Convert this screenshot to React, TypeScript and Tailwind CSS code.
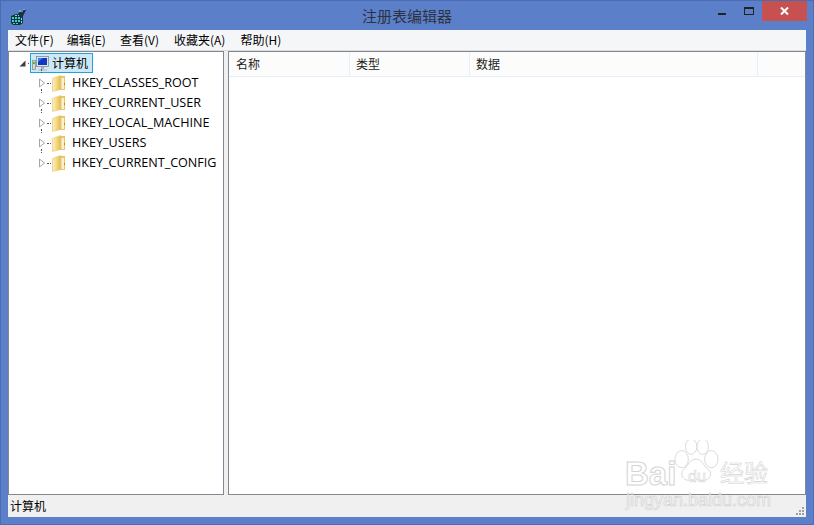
import type { ReactNode } from 'react';

const cjk = "font-['Noto_Sans_CJK_SC','Noto_Sans',sans-serif]";

const menus = [
  { label: '文件(F)', gap: 'mr-[13px]' },
  { label: '编辑(E)', gap: 'mr-[14px]' },
  { label: '查看(V)', gap: 'mr-[15px]' },
  { label: '收藏夹(A)', gap: 'mr-[15px]' },
  { label: '帮助(H)', gap: 'mr-0' },
];
const hives = ['HKEY_CLASSES_ROOT', 'HKEY_CURRENT_USER', 'HKEY_LOCAL_MACHINE', 'HKEY_USERS', 'HKEY_CURRENT_CONFIG'];
const columns = [
  { label: '名称', width: 'w-[121px] pl-[7px]' },
  { label: '类型', width: 'w-[120px] pl-[6px]' },
  { label: '数据', width: 'w-[288px] pl-[6px]' },
];

const RegeditIcon = () => (
  <svg width="17" height="17" viewBox="0 0 17 17">
    <path d="M1 8l5-2 6 1 1 3v5l-3 2H3l-2-2z" fill="#12343a" />
    <path d="M2 9h2v2H2zM5 9h2v2H5zM8 9h2v2H8zM2 12h2v2H2zM5 12h2v2H5zM8 12h2v2H8zM3 15h2v1H3zM6 15h2v1H6z" fill="#36d4cc" />
    <path d="M5 7h2v1H5zM8 7h2v1H8zM11 10h1v2h-1zM11 13h1v2h-1z" fill="#7fe6e0" />
    <path d="M8 6l2-4 2 3 2-4 2 1-2 4-2 4-2-1z" fill="#18303f" />
    <path d="M9 2h2v2H9zM13 1h2v1h-2z" fill="#6db8da" />
  </svg>
);

const ComputerIcon = () => (
  <svg width="17" height="17" viewBox="0 0 17 17">
    <rect x="0.5" y="5.5" width="3" height="9" fill="#d4d8d4" stroke="#8b958b" strokeWidth="0.8" />
    <rect x="1" y="7" width="2" height="2" fill="#52b84c" />
    <rect x="4.5" y="1.5" width="12" height="10" fill="#dfe4ea" stroke="#80899a" strokeWidth="0.8" />
    <rect x="6" y="3" width="9" height="7" fill="#1436c4" />
    <path d="M6 3h5l-5 4z" fill="#2f86e8" />
    <rect x="9" y="12" width="3" height="2" fill="#a7aeb8" />
    <rect x="6" y="14" width="9" height="2" fill="#c6ccd4" />
  </svg>
);

const FolderIcon = ({ id }: { id: string }) => (
  <svg width="14" height="17" viewBox="0 0 14 17">
    <defs>
      <linearGradient id={id} x1="0" y1="0" x2="1" y2="0">
        <stop offset="0" stopColor="#fbf1c4" />
        <stop offset="0.55" stopColor="#f3d77e" />
        <stop offset="1" stopColor="#e2bb55" />
      </linearGradient>
    </defs>
    <path d="M7 1h6v14H7z" fill="#eac766" />
    <path d="M9.5 3h2.5v11H9.5z" fill="#fbf3cf" />
    <path d="M12 8h1v2h-1z" fill="#b98a2c" />
    <path d="M.5 3.5l8-3v14l-8 2z" fill={`url(#${id})`} stroke="#e0c272" strokeWidth="0.6" />
  </svg>
);

const Panel = ({ className, children }: { className: string; children: ReactNode }) => (
  <div className={`border border-[#828790] bg-white ${className}`}>{children}</div>
);

const TreeRow = ({ label }: { label: string }) => (
  <div className="relative flex h-5 items-center">
    {/* tree connector, runs down between the rows */}
    <div className="absolute left-[32px] top-[-4px] h-1 w-px border-l border-dotted border-[#555]" />
    <svg width="8" height="10" viewBox="0 0 8 10" className="ml-[29px]">
      <path d="M1.5 1l5 4-5 4z" fill="#fff" stroke="#a6a6a6" />
    </svg>
    <div className="ml-[1px] h-px w-[4px] border-t border-dotted border-[#555]" />
    <div className="ml-[1px]">
      <FolderIcon id={`folder-${label}`} />
    </div>
    <span className="ml-[6px] whitespace-nowrap font-['Open_Sans',sans-serif] text-[12.6px] leading-none text-black">{label}</span>
  </div>
);

export default function App() {
  return (
    <div className={`relative flex h-[525px] w-[814px] flex-col overflow-hidden border border-[#4a6cb4] bg-[#5c7fca] ${cjk}`}>
      {/* Title bar */}
      <div className="relative flex h-[29px] items-center justify-center">
        <div className="absolute left-[9px] top-[7px]">
          <RegeditIcon />
        </div>
        <span className="text-[15px] leading-none text-[#2c3340]">注册表编辑器</span>
        <div className="absolute right-[6px] top-0 flex items-start">
          <div className="mr-[18px] mt-[12px] h-[2px] w-[8px] bg-[#222]" />
          <div className="mr-[8px] mt-[6px] h-[8px] w-[10px] border border-t-2 border-[#222]" />
          <div className="flex h-5 w-[45px] items-center justify-center bg-[#c75050]">
            <svg width="9" height="8" viewBox="0 0 9 8">
              <path d="M1 .5l7 7M8 .5l-7 7" stroke="#fff" strokeWidth="2" />
            </svg>
          </div>
        </div>
      </div>

      {/* Client area */}
      <div className="mx-[7px] flex min-h-0 flex-1 flex-col bg-[#f0f0f0]">
        <div className="flex h-5 items-center bg-[#f5f6f7] pl-[7px] text-[12px] leading-none text-black">
          {menus.map((m) => (
            <span key={m.label} className={`whitespace-nowrap ${m.gap}`}>{m.label}</span>
          ))}
        </div>
        <div className="flex min-h-0 flex-1 gap-[4px] border-t border-[#dcdcdc] bg-[#f0f0f0]">
          <Panel className="w-[216px] pt-[1px]">
            <div className="relative flex h-5 items-center">
              <svg width="7" height="7" viewBox="0 0 7 7" className="ml-[10px]">
                <path d="M6.5 .5v6h-6z" fill="#404040" />
              </svg>
              <div className="ml-[2px] h-px w-[3px] border-t border-dotted border-[#555]" />
              <div className="ml-[-1px] flex h-[20px] w-[63px] items-center border border-[#26a0da] bg-[#cbe8f6] pl-[1px]">
                <ComputerIcon />
                <span className="ml-[3px] text-[12px] leading-none text-black">计算机</span>
              </div>
            </div>
            {hives.map((h) => (
              <TreeRow key={h} label={h} />
            ))}
          </Panel>
          <Panel className="flex-1">
            <div className="flex h-[25px] border-b border-[#e5effa] bg-[#fcfcfc] text-[12px] leading-none text-[#222]">
              {columns.map((c) => (
                <div key={c.label} className={`flex items-center border-r border-[#eaeff7] ${c.width}`}>{c.label}</div>
              ))}
            </div>
          </Panel>
        </div>
        <div className="relative flex h-[22px] items-center pl-[2px] text-[12px] leading-none text-black">
          计算机
          <svg width="10" height="10" viewBox="0 0 10 10" className="absolute bottom-[1px] right-[1px]">
            <path d="M7 1h2v2H7zM4 4h2v2H4zM7 4h2v2H7zM1 7h2v2H1zM4 7h2v2H4zM7 7h2v2H7z" fill="#a0a0a0" />
          </svg>
        </div>
      </div>
      <div className="h-[7px]" />

      {/* Watermark */}
      <div className="pointer-events-none absolute left-[623px] top-[439px] w-[150px] select-none">
        <svg width="46" height="46" viewBox="0 0 48 48" className="absolute left-[49px] top-[0px]" fill="none" stroke="#d8d8d8" strokeWidth="1">
          <ellipse cx="9" cy="20" rx="7" ry="9" fill="#fff" fillOpacity="0.5" />
          <ellipse cx="19" cy="7" rx="6" ry="8" fill="#fff" fillOpacity="0.5" />
          <ellipse cx="31" cy="7" rx="6" ry="8" fill="#fff" fillOpacity="0.5" />
          <ellipse cx="40" cy="20" rx="7" ry="9" fill="#fff" fillOpacity="0.5" />
          <path d="M24 20c7 0 8 8 13 11 5 4 1 12-6 11-3 0-5-1-7-1s-5 1-8 1c-6 0-9-7-5-11 5-4 6-11 13-11z" fill="#fff" fillOpacity="0.5" />
        </svg>
        <span className="absolute left-[1px] top-[17px] font-['Liberation_Sans',sans-serif] text-[33px] font-bold leading-none text-white [-webkit-text-stroke:1px_#d4d4d4]">Bai</span>
        <span className="absolute left-[64px] top-[29px] font-['Liberation_Sans',sans-serif] text-[16px] leading-none text-white [-webkit-text-stroke:0.5px_#cfcfcf]">du</span>
        <span className="absolute left-[96px] top-[20px] text-[24px] leading-none text-white [-webkit-text-stroke:0.6px_#d4d4d4]">经验</span>
        <span className="absolute left-[2px] top-[51px] whitespace-nowrap font-['Liberation_Sans',sans-serif] text-[18px] leading-none text-white/60 [-webkit-text-stroke:0.6px_#cfcfcf]">jingyan.baidu.com</span>
      </div>
    </div>
  );
}
